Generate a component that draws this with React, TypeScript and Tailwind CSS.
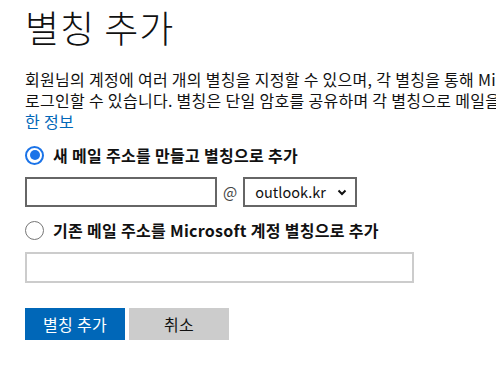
import { useState } from 'react';

const font = { fontFamily: '"Noto Sans CJK KR", "Noto Sans", sans-serif' };

function Radio({ checked }: { checked: boolean }) {
    return (
        <span
            className={`flex h-[19px] w-[19px] shrink-0 items-center justify-center rounded-full ${checked ? 'border-2 border-[#1a73e8]' : 'border-[1.5px] border-[#767676]'}`}
        >
            {checked && <span className="h-[10px] w-[10px] rounded-full bg-[#1a73e8]" />}
        </span>
    );
}

export default function App() {
    const [mode, setMode] = useState<'new' | 'existing'>('new');

    return (
        <div className="h-[368px] w-[496px] overflow-hidden bg-white text-[#111]" style={font}>
            <div className="w-[760px] pl-[25px] pt-[2px]">
                <h1 className="text-[37px] font-light leading-[50px] tracking-[1px]">별칭 추가</h1>

                <p className="mt-[17px] whitespace-nowrap text-[16px] leading-[21px] tracking-[0.3px]">
                    회원님의 계정에 여러 개의 별칭을 지정할 수 있으며, 각 별칭을 통해 Microsoft 서비스에
                    <br />
                    로그인할 수 있습니다. 별칭은 단일 암호를 공유하며 각 별칭으로 메일을 받을 수 있습니다. <a className="text-[#0067b8]">자세</a>
                    <br />
                    <a className="text-[#0067b8]">한 정보</a>
                </p>

                <label className="mt-[12px] flex cursor-pointer items-center gap-[9px]" onClick={() => setMode('new')}>
                    <Radio checked={mode === 'new'} />
                    <span className="text-[16px] font-semibold leading-[22px] tracking-[0.3px]">새 메일 주소를 만들고 별칭으로 추가</span>
                </label>

                <div className="mt-[11px] flex items-center">
                    <input className="h-[30px] w-[192px] border-2 border-[#666] px-2 text-[15px] outline-none" />
                    <span className="mx-[6px] text-[15px] text-[#444]">@</span>
                    <div className="flex h-[30px] w-[114px] items-center justify-between border-2 border-[#666] pl-[10px] pr-[7px] text-[14.5px]">
                        <span>outlook.kr</span>
                        <svg width="12" height="12" viewBox="0 0 12 12" fill="none">
                            <path d="M2.5 4.5 6 8l3.5-3.5" stroke="#111" strokeWidth="2" />
                        </svg>
                    </div>
                </div>

                <label className="mt-[12px] flex cursor-pointer items-center gap-[9px]" onClick={() => setMode('existing')}>
                    <Radio checked={mode === 'existing'} />
                    <span className="text-[16px] font-semibold leading-[22px] tracking-[0.3px]">기존 메일 주소를 Microsoft 계정 별칭으로 추가</span>
                </label>

                <input className="mt-[11px] block h-[31px] w-[389px] border-2 border-[#ccc] px-2 text-[15px] outline-none" />

                <div className="mt-[25px] flex gap-[4px]">
                    <button className="h-[32px] w-[100px] bg-[#0067b8] text-[16px] tracking-[0.3px] text-white">별칭 추가</button>
                    <button className="h-[32px] w-[100px] bg-[#cccccc] text-[16px] tracking-[0.3px] text-[#111]">취소</button>
                </div>
            </div>
        </div>
    );
}
